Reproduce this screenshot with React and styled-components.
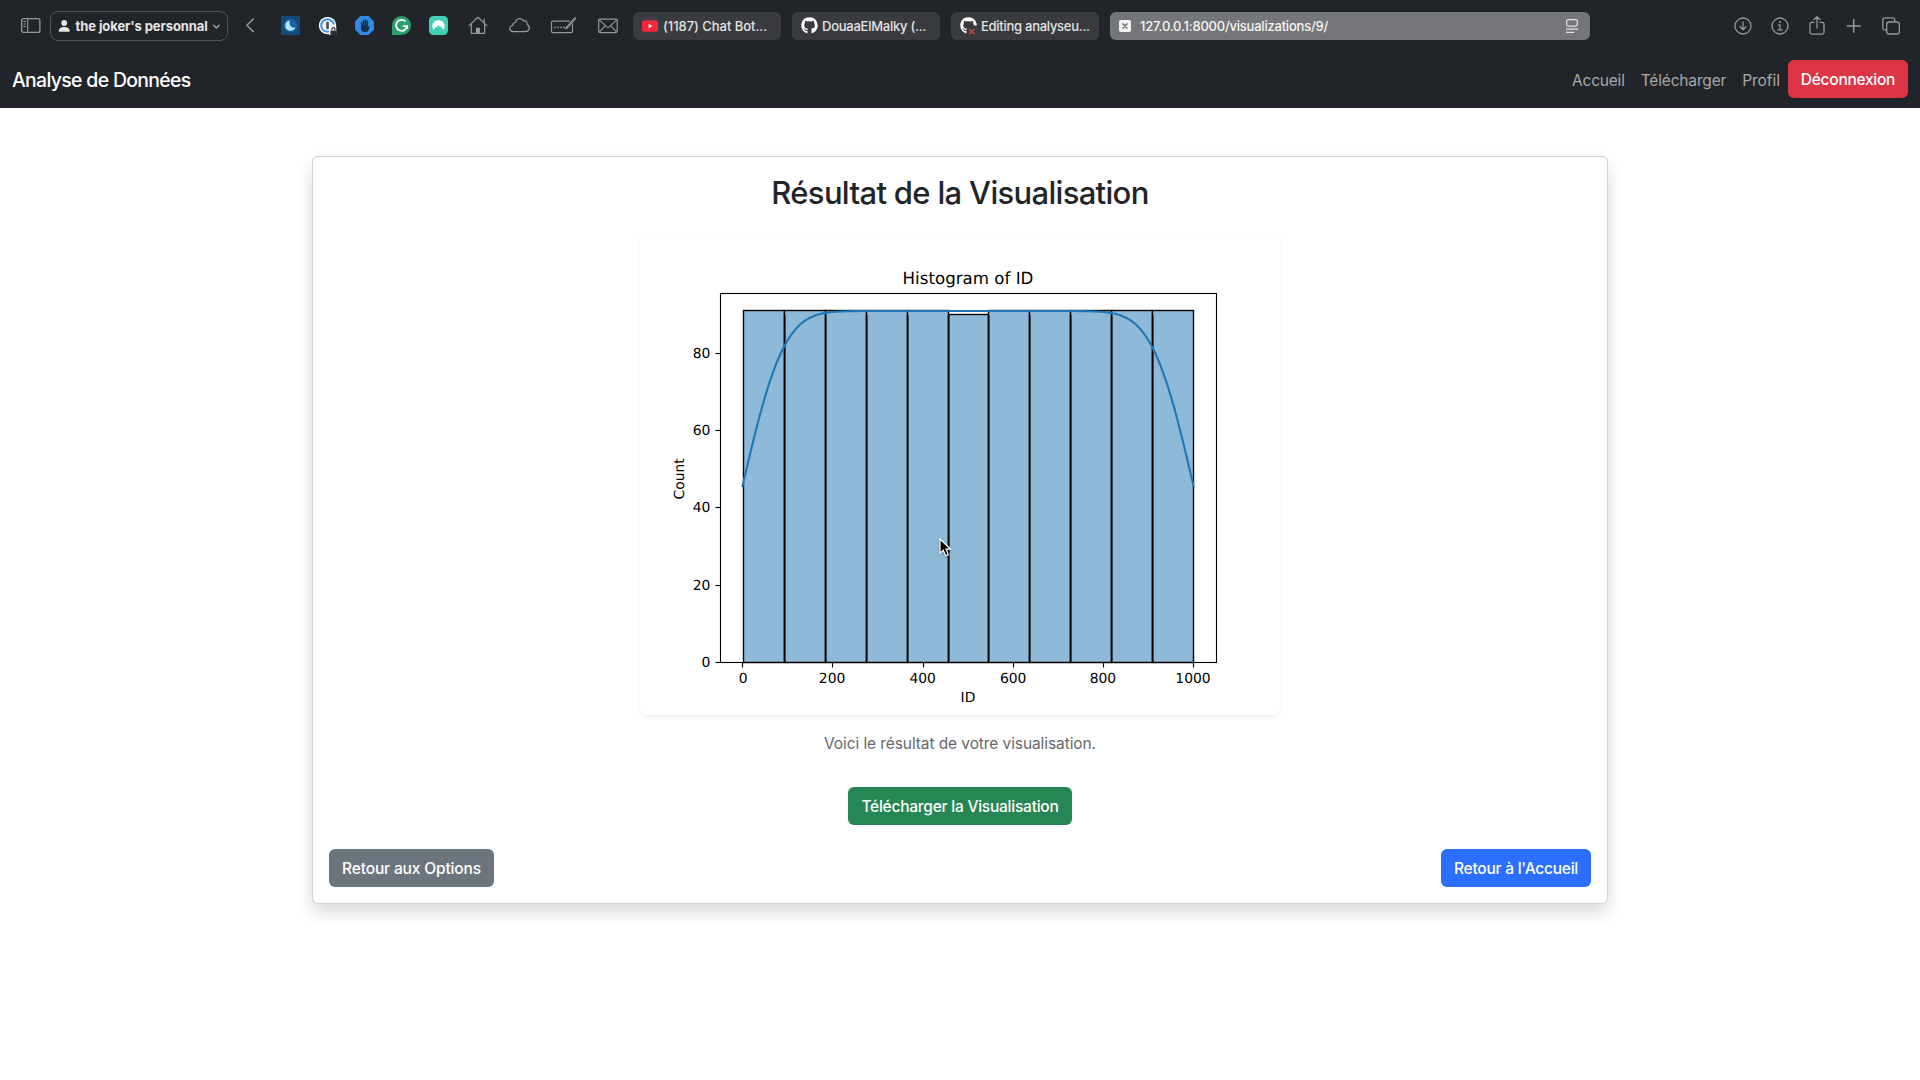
import React from 'react';
import styled, { createGlobalStyle } from 'styled-components';
import { FaGithub } from 'react-icons/fa';

const GlobalStyle = createGlobalStyle`
  *, *::before, *::after { box-sizing: border-box; }
  body {
    margin: 0;
    background: #fff;
    color: #212529;
    font-family: Inter, "Liberation Sans", sans-serif;
    font-size: 15.5px;
    line-height: 24px;
  }
`;

const Page = styled.div`
  min-height: 1080px;
  display: flex;
  flex-direction: column;
`;

/* ---------- browser toolbar ---------- */

const Toolbar = styled.header`
  display: flex;
  align-items: center;
  height: 52px;
  padding: 0 19px 0 20px;
  background: #212529;
  color: #96989b;
`;

const Glyph = styled.svg`
  display: block;
  flex: none;
  width: ${(p) => p.$w || 20}px;
  height: 20px;
  margin-left: ${(p) => p.$ml || 0}px;
  fill: none;
  stroke: currentColor;
  stroke-width: 1.3;
  stroke-linecap: round;
  stroke-linejoin: round;
`;

const ProfilePill = styled.div`
  display: flex;
  align-items: center;
  flex: none;
  width: 178px;
  height: 30px;
  margin-left: 8px;
  padding: 0 6px 1px 7px;
  border: 1.5px solid #505357;
  border-radius: 8px;
  color: #e6e6e7;
  font-size: 13px;
  font-weight: 700;
  letter-spacing: -0.08px;
  white-space: nowrap;
`;

const PillLabel = styled.span`
  flex: 1;
  margin-left: 4.5px;
`;

const Extensions = styled.div`
  display: flex;
  gap: 18px;
  margin: 0 0 1px 21px;
`;

const ExtIcon = styled.svg`
  display: block;
  width: 19px;
  height: 19px;
`;

const Tabs = styled.div`
  display: flex;
  gap: 11px;
  margin-left: 14px;
`;

const Tab = styled.div`
  display: flex;
  align-items: center;
  width: ${(p) => (p.$active ? 480 : 148)}px;
  height: 28px;
  padding: 0 ${(p) => (p.$active ? 12 : 8)}px 0 ${(p) => (p.$active ? 9 : 8)}px;
  border-radius: 6px;
  background: ${(p) => (p.$active ? '#757679' : '#393b3f')};
  color: ${(p) => (p.$active ? '#f4f4f4' : '#e3e3e4')};
  font-size: 13px;
  font-weight: 500;
  letter-spacing: ${(p) => p.$tracking || 0}px;
  white-space: nowrap;
`;

const TabLabel = styled.span`
  flex: 1;
  margin-left: ${(p) => p.$ml}px;
`;

const Favicon = styled.svg`
  display: block;
  flex: none;
  width: 18px;
  height: 18px;
`;

const GithubSlot = styled.span`
  position: relative;
  display: flex;
  justify-content: center;
  width: 18px;
  height: 18px;
  color: #fff;
  font-size: 17px;
`;

const FailBadge = styled.svg`
  position: absolute;
  right: 0;
  bottom: 0;
  width: 10px;
  height: 10px;
`;

const Actions = styled.div`
  display: flex;
  gap: 17px;
  margin: 0 0 1px auto;
`;

/* ---------- site navbar ---------- */

const Navbar = styled.nav`
  display: flex;
  align-items: center;
  justify-content: space-between;
  height: 56px;
  padding: 8px 12px;
  background: #212529;
`;

const Brand = styled.a`
  color: #fff;
  font-size: 19.4px;
  font-weight: 500;
  letter-spacing: -0.66px;
  line-height: 30px;
`;

const NavList = styled.div`
  display: flex;
  align-items: flex-start;
  height: 40px;
`;

const NavLink = styled.a`
  padding: 9px 8px 7px;
  color: #a6a8a9;
  letter-spacing: ${(p) => p.$tracking}px;
`;

/* ---------- page content ---------- */

const Button = styled.button`
  height: 38px;
  width: ${(p) => p.$w}px;
  padding: 1px 0 0;
  border: 0;
  border-radius: 6px;
  background: ${(p) => p.$bg};
  color: #fff;
  font: 500 15.5px/25px Inter, "Liberation Sans", sans-serif;
  letter-spacing: ${(p) => p.$tracking}px;
  white-space: nowrap;
`;

const Card = styled.main`
  display: flex;
  flex-direction: column;
  align-items: center;
  width: 1296px;
  height: 748px;
  margin: 48px auto 0;
  padding: 16px;
  border: 1px solid rgba(0, 0, 0, 0.175);
  border-radius: 6px;
  background: #fff;
  box-shadow: 0 8px 16px rgba(0, 0, 0, 0.15);
`;

const Title = styled.h2`
  margin: 1px 0 23px;
  font-size: 31px;
  font-weight: 500;
  letter-spacing: -0.68px;
  line-height: 38px;
`;

const Figure = styled.figure`
  position: relative;
  width: 640px;
  height: 480px;
  margin: 0 0 17px;
  border-radius: 6px;
  background: #fff;
  box-shadow: 0 2px 4px rgba(0, 0, 0, 0.075);
`;

const ChartSvg = styled.svg`
  display: block;
  font-family: "DejaVu Sans", sans-serif;
  font-size: 13.89px;
  fill: #000;
  text-rendering: geometricPrecision;
`;

const Pointer = styled.svg`
  position: absolute;
  left: 298px;
  top: 302px;
  width: 16px;
  height: 22px;
  filter: drop-shadow(0 1px 1px rgba(0, 0, 0, 0.35));
`;

const Caption = styled.p`
  margin: 0 0 31px;
  color: #66686a;
  letter-spacing: -0.09px;
`;

const Footer = styled.div`
  display: flex;
  justify-content: space-between;
  align-self: stretch;
  margin-top: 24px;
`;

/* ---------- histogram ---------- */

const EDGES = [103.5, 144.5, 185.5, 226.5, 267.5, 308.5, 348.5, 389.5, 430.5, 471.5, 512.5, 553.5];
const COUNTS = [91, 91, 91, 91, 91, 90, 91, 91, 91, 91, 91];
const X_TICKS = [
  [0, 102.5, 103.2],
  [200, 192.5, 192.1],
  [400, 283.5, 282.7],
  [600, 373.5, 373.2],
  [800, 463.5, 462.9],
  [1000, 553.5, 553],
];
const Y_TICKS = [[0, 427.5], [20, 350.5], [40, 272.5], [60, 195.5], [80, 118.5]];
const BASE = 427.5;

const phi = (z) => {
  const t = 1 / (1 + 0.2316419 * Math.abs(z));
  const tail =
    0.39894228 * Math.exp((-z * z) / 2) * t *
    (0.31938153 + t * (-0.356563782 + t * (1.781477937 + t * (-1.821255978 + t * 1.330274429))));
  return z > 0 ? 1 - tail : tail;
};

const density = Array.from({ length: 201 }, (_, i) => {
  const v = 1 + (999 * i) / 200;
  const count = 91 * (phi((v - 0.5) / 72.5) - phi((v - 1000.5) / 72.5));
  return `${(102.55 + (v - 1) * 0.4514).toFixed(2)},${(428 - count * 3.868).toFixed(2)}`;
}).join(' ');

function Histogram() {
  return (
    <ChartSvg width="640" height="480" viewBox="0 0 640 480">
      {COUNTS.map((count, i) => {
        const top = count === 91 ? 75.5 : 79.5;
        return (
          <rect
            key={EDGES[i]}
            x={EDGES[i]}
            y={top}
            width={EDGES[i + 1] - EDGES[i]}
            height={BASE - top}
            fill="#8fb9d9"
            stroke="#000"
            strokeWidth="1.39"
          />
        );
      })}
      {EDGES.slice(1, -1).map((x) => (
        <line key={x} x1={x + 0.2} x2={x + 0.2} y1="80" y2={BASE} stroke="#000" strokeWidth="1.6" />
      ))}
      <polyline points={density} fill="none" stroke="#1f77b4" strokeWidth="2.08" strokeLinecap="square" />
      <rect x="80.5" y="58.5" width="496" height="369" fill="none" stroke="#000" strokeWidth="1.11" />
      {X_TICKS.map(([label, x, labelX]) => (
        <g key={label}>
          <line x1={x} x2={x} y1="428" y2="432.5" stroke="#000" strokeWidth="1.11" />
          <text x={labelX} y="448.3" textAnchor="middle">{label}</text>
        </g>
      ))}
      {Y_TICKS.map(([label, y]) => (
        <g key={label}>
          <line x1="75.5" x2="80" y1={y} y2={y} stroke="#000" strokeWidth="1.11" />
          <text x="70.4" y={y + 4.7} textAnchor="end">{label}</text>
        </g>
      ))}
      <text x="328" y="48.800" textAnchor="middle" fontSize="16.67">Histogram of ID</text>
      <text x="328" y="467" textAnchor="middle">ID</text>
      <text transform="translate(43.8 243.8) rotate(-90)" textAnchor="middle">Count</text>
    </ChartSvg>
  );
}

/* ---------- extension icons ---------- */

function ExtensionIcons() {
  return (
    <Extensions>
      <ExtIcon viewBox="0 0 19 19">
        <rect width="19" height="19" fill="#144976" />
        <circle cx="9.5" cy="9.7" r="6.9" fill="#1c60a6" />
        <path d="M8.9 4.6a5.1 5.1 0 1 0 5.4 6.4 3.6 3.6 0 0 1-4.1-.3c-1.6-1.3-2-4-1.3-6.100z" fill="#b5e3fb" />
      </ExtIcon>
      <ExtIcon viewBox="0 0 19 19">
        <circle cx="9.5" cy="9.5" r="9.5" fill="#15171a" />
        <circle cx="9.5" cy="9.5" r="8.7" fill="#fff" />
        <circle cx="9.5" cy="9.5" r="6.3" fill="#f5f5f5" stroke="#4095e8" strokeWidth="2" />
        <rect x="8.1" y="5.7" width="2.8" height="7.6" rx="1" fill="#53565b" />
        <path d="M11 19v-6.5h1.3v-1.2a3 3 0 0 1 6 0V19z" fill="#f7f7f7" />
        <path d="M12.4 19v-4.4h6.200V19z" fill="#2b2d31" />
        <path d="M14 14.600v-1.5a1.500 1.500 0 0 1 3 0v1.500" fill="none" stroke="#2b2d31" strokeWidth="1.1" />
      </ExtIcon>
      <ExtIcon viewBox="0 0 19 19">
        <path d="M5.5 0h8L19 5.5v8L13.5 19h-8L0 13.5v-8z" fill="#318be3" />
        <path
          d="M6 12.5V6.3a.8.8 0 0 1 1.5 0V9h.3V4.5a.8.8 0 0 1 1.6 0V9h.3V4a.8.8 0 0 1 1.6 0v5h.3V5.3a.75.75 0 0 1 1.5 0v5.9l.5-.9c.4-.7 1.5-.4 1.2.5l-1.600 3.600c-.5 1-1.400 1.700-2.900 1.700H9.500C7.300 16.100 6 14.600 6 12.500z"
          fill="#16304e"
        />
      </ExtIcon>
      <ExtIcon viewBox="0 0 19 19">
        <path d="M9.5 0A9.5 9.5 0 1 1 9.5 19H0V9.5A9.5 9.5 0 0 1 9.5 0z" fill="#2ba06f" />
        <path d="M13.5 5.5A5.5 5.5 0 1 0 15 10.1h-4.2M15 10.1V13" fill="none" stroke="#fff" strokeWidth="1.9" />
      </ExtIcon>
      <ExtIcon viewBox="0 0 19 19">
        <rect width="19" height="19" rx="4.5" fill="#43cfb5" />
        <path d="M4.600 13.900C1.600 9.400 4.700 4.300 9.500 4.300s7.900 5.100 4.900 9.600l-2.500-4-.9 1.500-1.500-2.600-1.600 2.700-.8-.9z" fill="#fff" />
      </ExtIcon>
    </Extensions>
  );
}

function BrowserToolbar() {
  return (
    <Toolbar>
      <Glyph $w={22} viewBox="0 0 22 20">
        <rect x="1.6" y="2.6" width="18.3" height="13.8" rx="2" />
        <path d="M7.7 2.6v13.8M3.8 5.5h1.7M3.8 8h1.7M3.8 10.5h1.7" strokeWidth="1.1" />
      </Glyph>
      <ProfilePill>
        <Glyph $w={13} viewBox="0 0 13 20">
          <g fill="#e6e6e7" stroke="none">
            <circle cx="6.2" cy="7" r="2.9" />
            <path d="M.7 15.7c0-3.200 2.300-4.600 5.500-4.600s5.500 1.400 5.500 4.600z" />
          </g>
        </Glyph>
        <PillLabel>the joker's personnal</PillLabel>
        <Glyph $w={9} viewBox="0 0 9 20">
          <path d="M1.7 9.300l2.700 2.600 2.700-2.600" stroke="#a4a6a8" strokeWidth="1.400" />
        </Glyph>
      </ProfilePill>
      <Glyph $w={20} $ml={12} viewBox="0 0 20 20">
        <path d="M13.3 3L6.800 9.300l6.500 6.300" strokeWidth="1.5" />
      </Glyph>
      <ExtensionIcons />
      <Glyph $w={20} $ml={20} viewBox="0 0 20 20">
        <path d="M1 9.600L9.900 1.300l8.900 8.300M3.300 8v9.300h13.300V8M16.200 6.800V3" strokeWidth="1.2" />
        <path d="M7.900 17.200v-5.500h4v5.500z" fill="currentColor" stroke="none" />
      </Glyph>
      <Glyph $w={24} $ml={20} viewBox="0 0 24 20">
        <path d="M5.300 15.600h12.200a3.800 3.800 0 0 0 1.700-7.200c.2-3-1.800-4.300-3.800-3.600C14 1.700 8.700 1.500 7.400 6.500c-1.800 0-2.700 1.300-2.600 2.700C.3 10.700 1 15.300 5.300 15.600z" strokeWidth="1.2" />
      </Glyph>
      <Glyph $w={27} $ml={18} viewBox="0 0 27 20">
        <path d="M19.300 5.200H3a1.500 1.500 0 0 0-1.500 1.500v8.500A1.500 1.500 0 0 0 3 16.700h18a1.500 1.500 0 0 0 1.500-1.500V8" strokeWidth="1.2" />
        <path d="M25 1.600l-8.300 9.200-1.300 2 2.100-1 8.300-9.300" strokeWidth="1.1" />
        <path d="M5 11.300h.1M8 11.300h.1M11 11.300h.1M14 11.300h.1" strokeWidth="1.7" />
      </Glyph>
      <Glyph $w={22} $ml={20} viewBox="0 0 22 20">
        <rect x="1.7" y="3.2" width="18.5" height="13.4" rx="1.5" strokeWidth="1.2" />
        <path d="M2.200 3.700l7.500 7.100c.8.700 1.800.7 2.600 0l7.500-7.100M2.200 16.100l6-6.300M19.700 16.100l-6-6.300" strokeWidth="1.1" />
      </Glyph>
      <Tabs>
        <Tab $tracking={-0.03}>
          <Favicon viewBox="0 0 18 18">
            <rect width="18" height="18" rx="3" fill="#403f41" />
            <rect x="1" y="3.5" width="16" height="11.3" rx="2.5" fill="#f8263a" />
            <path d="M7.6 7l4 2.100-4 2.100z" fill="#fff" />
          </Favicon>
          <TabLabel $ml={4}>(1187) Chat Bot...</TabLabel>
        </Tab>
        <Tab $tracking={-0.25}>
          <GithubSlot><FaGithub /></GithubSlot>
          <TabLabel $ml={4}>DouaaElMalky (...</TabLabel>
        </Tab>
        <Tab $tracking={-0.27}>
          <GithubSlot>
            <FaGithub />
            <FailBadge viewBox="0 0 10 10">
              <path d="M0 10V3l3-2.500h7V10z" fill="#393b3f" />
              <path d="M2.200 4l5.300 5.300M7.500 4L2.200 9.300" stroke="#d8414e" strokeWidth="1.3" />
            </FailBadge>
          </GithubSlot>
          <TabLabel $ml={4}>Editing analyseu...</TabLabel>
        </Tab>
        <Tab $active $tracking={-0.22}>
          <Glyph $w={12} viewBox="0 0 12 20">
            <rect x="0" y="4" width="12" height="12" rx="2" fill="#f3f3f3" stroke="none" />
            <path d="M4 8l4 4M8 8l-4 4" stroke="#6f7073" strokeWidth="1.7" />
          </Glyph>
          <TabLabel $ml={9}>127.0.0.1:8000/visualizations/9/</TabLabel>
          <Glyph $w={12} viewBox="0 0 12 20">
            <g stroke="#e6e6e7" strokeWidth="1.2" strokeLinecap="butt">
              <rect x=".7" y="3.6" width="10.6" height="6.5" rx="1.5" />
              <path d="M0 13.200h12M0 16.400h8.300" />
            </g>
          </Glyph>
        </Tab>
      </Tabs>
      <Actions>
        <Glyph viewBox="0 0 20 20">
          <circle cx="10" cy="10" r="8" />
          <path d="M10 6v7.500M7 10.700l3 3 3-3" />
        </Glyph>
        <Glyph viewBox="0 0 20 20">
          <circle cx="10" cy="10" r="8" />
          <path d="M8.300 8.800H10v5M8 13.900h4.200" />
          <circle cx="9.9" cy="6" r="1.1" fill="currentColor" stroke="none" />
        </Glyph>
        <Glyph viewBox="0 0 20 20">
          <path d="M7 6.300H4.800a1.800 1.800 0 0 0-1.800 1.800v8.200a1.800 1.800 0 0 0 1.800 1.800h10.400a1.800 1.800 0 0 0 1.800-1.800V8.100a1.800 1.800 0 0 0-1.800-1.800H13M10 12V.9M7 3.500L10 .7l3 2.800" />
        </Glyph>
        <Glyph viewBox="0 0 20 20">
          <path d="M9.700 3.500v12.800M3.300 9.900h12.800" strokeWidth="1.5" />
        </Glyph>
        <Glyph viewBox="0 0 20 20">
          <rect x="5.700" y="6" width="12.600" height="12" rx="2.300" />
          <path d="M5 14H3.800a2 2 0 0 1-2-2V3.900a2 2 0 0 1 2-2h7.900a2 2 0 0 1 2 2v1.400" />
        </Glyph>
      </Actions>
    </Toolbar>
  );
}

export default function App() {
  return (
    <Page>
      <GlobalStyle />
      <BrowserToolbar />
      <Navbar>
        <Brand>Analyse de Données</Brand>
        <NavList>
          <NavLink $tracking={-0.22}>Accueil</NavLink>
          <NavLink $tracking={-0.16}>Télécharger</NavLink>
          <NavLink $tracking={-0.04}>Profil</NavLink>
          <Button $bg="#dc3545" $w={120} $tracking={-0.27}>Déconnexion</Button>
        </NavList>
      </Navbar>
      <Card>
        <Title>Résultat de la Visualisation</Title>
        <Figure>
          <Histogram />
          <Pointer viewBox="0 0 16 22">
            <path d="M2 2v14.200l3.300-3 2.400 5.500 2.700-1.100-2.400-5.400h4.600z" fill="#000" stroke="#fff" strokeWidth="1.2" />
          </Pointer>
        </Figure>
        <Caption>Voici le résultat de votre visualisation.</Caption>
        <Button $bg="#268754" $w={224} $tracking={-0.23}>Télécharger la Visualisation</Button>
        <Footer>
          <Button $bg="#6c757d" $w={165} $tracking={-0.14}>Retour aux Options</Button>
          <Button $bg="#2c6eff" $w={150} $tracking={-0.24}>Retour à l'Accueil</Button>
        </Footer>
      </Card>
    </Page>
  );
}
